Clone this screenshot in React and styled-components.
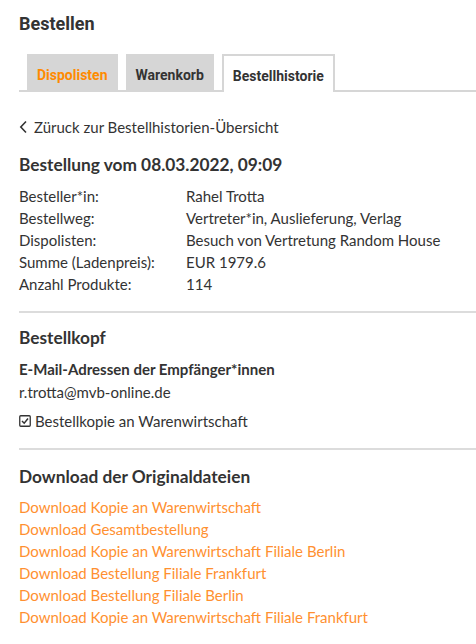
import React from "react";
import styled, { createGlobalStyle } from "styled-components";

const GlobalStyle = createGlobalStyle`
	body {
		margin: 0;
		background: #fff;
		color: #333;
		font-family: "Lato", "Open Sans", sans-serif;
	}
`;

const S = {};

S.Page = styled.div`
	padding: 12px 0 0 19px;
`;

S.PageTitle = styled.h1`
	margin: 0;
	font-family: "Roboto", sans-serif;
	font-size: 18px;
	font-weight: 700;
	line-height: 24px;
	color: #333;
`;

S.TabBar = styled.div`
	display: flex;
	gap: 8px;
	margin-top: 18px;
	padding-left: 8px;
	border-bottom: 2px solid #d6d6d6;
`;

S.Tab = styled.div`
	box-sizing: border-box;
	height: ${p => (p.active ? "38px" : "36px")};
	margin-bottom: ${p => (p.active ? "-2px" : "0")};
	padding: ${p => (p.active ? "3px 9px 0" : "5px 10px 0")};
	display: flex;
	align-items: center;
	font-family: "Roboto", sans-serif;
	font-size: 14px;
	font-weight: 700;
	color: ${p => (p.highlight ? "#ff8a00" : "#333")};
	background: ${p => (p.active ? "#fff" : "#d6d6d6")};
	border: ${p => (p.active ? "2px solid #d6d6d6" : "none")};
	border-bottom: none;
`;

S.BackLink = styled.div`
	display: flex;
	align-items: center;
	gap: 6px;
	margin-top: 24px;
	font-size: 15px;
	line-height: 22px;
	color: #333;
`;

S.Section = styled.section`
	padding: ${p => p.top}px 0 16px;
	border-bottom: ${p => (p.last ? "none" : "2px solid #dcdcdc")};
`;

S.Heading = styled.h2`
	margin: 0 0 ${p => p.gap || 8}px;
	font-size: 17.3px;
	font-weight: 700;
	line-height: 24px;
	color: #333;
`;

S.InfoGrid = styled.div`
	display: grid;
	grid-template-columns: 167px 1fr;
	font-size: 15px;
	line-height: 22px;
`;

S.SubHeading = styled.div`
	margin-bottom: 1px;
	font-size: 15px;
	font-weight: 700;
	line-height: 22px;
`;

S.Text = styled.div`
	font-size: 15px;
	line-height: 22px;
`;

S.CheckRow = styled.div`
	display: flex;
	align-items: center;
	gap: 4px;
	margin-top: 7px;
	font-size: 15px;
	line-height: 22px;
`;

S.LinkList = styled.div`
	display: flex;
	flex-direction: column;
`;

S.Link = styled.a`
	font-size: 15px;
	line-height: 22px;
	color: #ff9030;
	text-decoration: none;
`;

const ChevronLeft = () => (
	<svg width="9" height="14" viewBox="0 0 9 14">
		<path d="M7 1.5 L1.8 7 L7 12.5" fill="none" stroke="#333" strokeWidth="1.6" />
	</svg>
);

const CheckBoxIcon = () => (
	<svg width="12" height="12" viewBox="0 0 12 12">
		<rect x="0.75" y="0.75" width="10.5" height="10.5" rx="1" fill="none" stroke="#333" strokeWidth="1.3" />
		<path d="M3 6 L5.2 8.2 L9 3.6" fill="none" stroke="#333" strokeWidth="1.5" />
	</svg>
);

const details = [
	["Besteller*in:", "Rahel Trotta"],
	["Bestellweg:", "Vertreter*in, Auslieferung, Verlag"],
	["Dispolisten:", "Besuch von Vertretung Random House"],
	["Summe (Ladenpreis):", "EUR 1979.6"],
	["Anzahl Produkte:", "114"]
];

const downloads = [
	"Download Kopie an Warenwirtschaft",
	"Download Gesamtbestellung",
	"Download Kopie an Warenwirtschaft Filiale Berlin",
	"Download Bestellung Filiale Frankfurt",
	"Download Bestellung Filiale Berlin",
	"Download Kopie an Warenwirtschaft Filiale Frankfurt"
];

export default function App() {
	return (
		<S.Page>
			<GlobalStyle />
			<S.PageTitle>{`Bestellen`}</S.PageTitle>
			<S.TabBar>
				<S.Tab highlight>{`Dispolisten`}</S.Tab>
				<S.Tab>{`Warenkorb`}</S.Tab>
				<S.Tab active>{`Bestellhistorie`}</S.Tab>
			</S.TabBar>
			<S.BackLink>
				<ChevronLeft />
				{`Züruck zur Bestellhistorien-Übersicht`}
			</S.BackLink>
			<S.Section top={15}>
				<S.Heading>{`Bestellung vom 08.03.2022, 09:09`}</S.Heading>
				<S.InfoGrid>
					{details.map(([label, value]) => (
						<React.Fragment key={label}>
							<span>{label}</span>
							<span>{value}</span>
						</React.Fragment>
					))}
				</S.InfoGrid>
			</S.Section>
			<S.Section top={13}>
				<S.Heading>{`Bestellkopf`}</S.Heading>
				<S.SubHeading>{`E-Mail-Adressen der Empfänger*innen`}</S.SubHeading>
				<S.Text>{`r.trotta@mvb-online.de`}</S.Text>
				<S.CheckRow>
					<CheckBoxIcon />
					{`Bestellkopie an Warenwirtschaft`}
				</S.CheckRow>
			</S.Section>
			<S.Section top={15} last>
				<S.Heading gap={7}>{`Download der Originaldateien`}</S.Heading>
				<S.LinkList>
					{downloads.map(item => (
						<S.Link key={item} href="#">
							{item}
						</S.Link>
					))}
				</S.LinkList>
			</S.Section>
		</S.Page>
	);
}
